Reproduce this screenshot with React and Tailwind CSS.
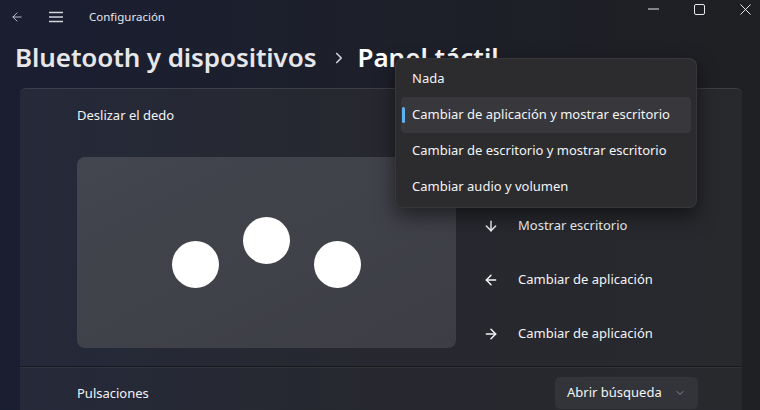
import { ArrowDown, ArrowLeft, ArrowRight, ArrowUp, ChevronDown, ChevronRight } from "lucide-react";

const font = { fontFamily: '"Noto Sans", "Open Sans", sans-serif' };

function TitleBar() {
  return (
    <div className="flex h-[34px] items-center">
      <div className="flex w-[32px] justify-center pl-[2px] text-gray-300">
        <ArrowLeft size={14} strokeWidth={1.5} />
      </div>
      <div className="ml-[8px] flex w-[32px] justify-center text-gray-300">
        <svg width="16" height="12" viewBox="0 0 16 12" fill="none" stroke="currentColor" strokeWidth="1.3">
          <path d="M1 1.5h14M1 6h14M1 10.5h14" />
        </svg>
      </div>
      <span className="ml-[17px] text-[11.5px] text-gray-200">Configuración</span>
      <div className="ml-auto mr-[-8px] flex h-full shrink-0 items-start text-gray-200">
        <div className="flex h-[18px] w-[46px] items-center justify-center">
          <svg width="11" height="2" viewBox="0 0 11 2"><path d="M0 1h11" stroke="currentColor" strokeWidth="1" /></svg>
        </div>
        <div className="flex h-[18px] w-[46px] items-center justify-center">
          <svg width="11" height="11" viewBox="0 0 11 11" fill="none"><rect x="0.5" y="0.5" width="10" height="10" rx="1.5" stroke="currentColor" /></svg>
        </div>
        <div className="flex h-[18px] w-[46px] items-center justify-center">
          <svg width="11" height="11" viewBox="0 0 11 11"><path d="M0.5 0.5l10 10M10.5 0.5l-10 10" stroke="currentColor" /></svg>
        </div>
      </div>
    </div>
  );
}

function GestureRow({ icon, label }) {
  return (
    <div className="flex h-[54px] items-center">
      <span className="flex w-[35px] text-gray-100">{icon}</span>
      {label && <span className="text-[13px] text-gray-100">{label}</span>}
    </div>
  );
}

function Menu() {
  const items = [
    "Nada",
    "Cambiar de aplicación y mostrar escritorio",
    "Cambiar de escritorio y mostrar escritorio",
    "Cambiar audio y volumen",
  ];
  return (
    <div className="absolute left-[395px] top-[58px] w-[302px] rounded-[8px] border border-white/5 bg-[#2c2c2f] px-[5px] py-[2px] shadow-[0_8px_20px_rgba(0,0,0,0.5)]">
      {items.map((item, i) => (
        <div
          key={item}
          className={
            "relative flex h-[36px] items-center rounded-[4px] pl-[11px] text-[13px] text-gray-100 " +
            (i === 1 ? "bg-[#38383c]" : "")
          }
        >
          {i === 1 && <span className="absolute left-[1px] top-[10px] h-[16px] w-[3px] rounded-full bg-[#5fb2f0]" />}
          {item}
        </div>
      ))}
    </div>
  );
}

export default function App() {
  return (
    <div
      className="relative h-[410px] w-[760px] overflow-hidden bg-gradient-to-r from-[#1a1e31] via-[#1d1f2a] to-[#1f2023]"
      style={font}
    >
      <TitleBar />
      <div className="flex h-[46px] items-center pl-[15px]">
        <h1 className="whitespace-nowrap text-[26px] font-semibold tracking-[-0.1px] text-gray-200">Bluetooth y dispositivos</h1>
        <ChevronRight size={18} strokeWidth={2.2} className="ml-[14px] mt-[2px] shrink-0 text-gray-300" />
        <h1 className="ml-[9px] whitespace-nowrap text-[26px] font-semibold text-white">Panel táctil</h1>
      </div>

      <div className="ml-[20px] mt-[8px] w-[722px] rounded-t-[6px] border-t border-white/10 bg-gradient-to-r from-[#252939] via-[#27282f] to-[#28292d]">
        <div className="flex h-[278px] flex-col border-b border-black/40 pl-[57px]">
          <div className="pt-[17px] text-[13px] text-gray-100">Deslizar el dedo</div>
          <div className="mt-[31px] flex">
            <div className="flex h-[191px] w-[379px] shrink-0 items-center justify-center rounded-[8px] bg-gradient-to-br from-[#43454f] to-[#3d3e44]">
              <div className="flex gap-[24px]">
                <span className="mt-[24px] h-[47px] w-[47px] rounded-full bg-white" />
                <span className="h-[47px] w-[47px] rounded-full bg-white" />
                <span className="mt-[24px] h-[47px] w-[47px] rounded-full bg-white" />
              </div>
            </div>
            <div className="ml-[27px] mt-[-12px] flex flex-col">
              <GestureRow icon={<ArrowUp size={16} strokeWidth={2.2} />} />
              <GestureRow icon={<ArrowDown size={16} strokeWidth={2.2} />} label="Mostrar escritorio" />
              <GestureRow icon={<ArrowLeft size={16} strokeWidth={2.2} />} label="Cambiar de aplicación" />
              <GestureRow icon={<ArrowRight size={16} strokeWidth={2.2} />} label="Cambiar de aplicación" />
            </div>
          </div>
        </div>
        <div className="border-t border-white/5 pl-[57px] pr-[44px]">
          <div className="flex h-[50px] items-center justify-between pt-[2px]">
            <span className="text-[13px] text-gray-100">Pulsaciones</span>
            <div className="mt-[-2px] flex h-[32px] w-[143px] items-center justify-between rounded-[5px] bg-[#333439] pl-[12px] pr-[12px] text-[13px] text-gray-100">
              Abrir búsqueda
              <ChevronDown size={12} strokeWidth={1.5} className="text-gray-400" />
            </div>
          </div>
          <div className="ml-[312px] h-[20px] w-[54px] rounded-t-[2px] border-x-2 border-t-2 border-gray-500/70" />
        </div>
      </div>

      <Menu />
    </div>
  );
}
